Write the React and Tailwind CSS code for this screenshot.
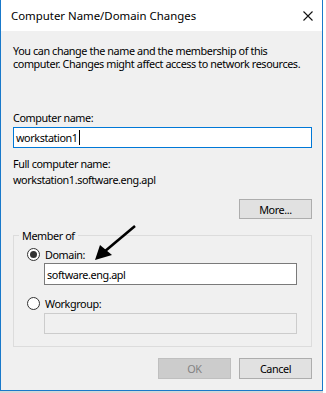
import React from 'react';

const font = { fontFamily: '"Noto Sans", "Liberation Sans", sans-serif' };

function Radio({ checked }) {
  return (
    <span className="w-[13px] h-[13px] rounded-full border border-[#333333] bg-white flex items-center justify-center shrink-0">
      {checked && <span className="w-[7px] h-[7px] rounded-full bg-[#333333]" />}
    </span>
  );
}

export default function App() {
  return (
    <div className="w-[326px] h-[393px] bg-white overflow-hidden text-[10.8px] tracking-[-0.4px] text-black" style={font}>
      <div className="w-[323px] h-[391px] flex flex-col border-x border-b border-[#1979ca] bg-[#f0f0f0]">
        {/* Title bar */}
        <div className="h-[31px] bg-white flex items-center justify-between pl-[10px] pr-[9px] shrink-0">
          <span className="text-[11.4px] tracking-normal">Computer Name/Domain Changes</span>
          <svg width="10" height="10" viewBox="0 0 10 10">
            <path d="M0.5 0.5 L9.5 9.5 M9.5 0.5 L0.5 9.5" stroke="#111" strokeWidth="1.1" />
          </svg>
        </div>

        {/* Body */}
        <div className="flex-1 flex flex-col pl-[12px] pr-[10px] pt-[13px] leading-[13px]">
          <p className="whitespace-nowrap">You can change the name and the membership of this<br />computer. Changes might affect access to network resources.</p>

          <div className="mt-[41px]">Computer name:</div>
          <div className="mt-[3px] h-[21px] border border-[#0078d7] bg-white flex items-center pl-[2px]">
            <span>workstation1</span>
            <span className="w-px h-[15px] bg-black ml-px" />
          </div>

          <div className="mt-[9px]">Full computer name:</div>
          <div className="mt-[3px]">workstation1.software.eng.apl</div>

          <button className="self-end mt-[13px] w-[73px] h-[20px] border border-[#adadad] bg-[#e1e1e1] text-[10.8px] tracking-[-0.4px]">More...</button>

          <fieldset className="relative mt-[10px] border border-[#dcdcdc] pb-[12px]">
            <legend className="ml-[5px] px-[3px]">Member of</legend>
            <div className="flex items-center gap-[5px] mt-[6px] ml-[13px]">
              <Radio checked />
              <span>Domain:</span>
            </div>
            <div className="mt-[2px] ml-[30px] h-[22px] w-[253px] border border-[#7a7a7a] bg-white flex items-center pl-[2px]">
              software.eng.apl
            </div>
            <div className="flex items-center gap-[5px] mt-[12px] ml-[13px]">
              <Radio />
              <span>Workgroup:</span>
            </div>
            <div className="mt-[3px] ml-[30px] h-[21px] w-[253px] border border-[#cccccc] bg-[#f0f0f0]" />

            {/* annotation arrow */}
            <svg className="absolute left-[76px] -top-[18px]" width="50" height="42" viewBox="0 0 50 42">
              <path d="M45 2 L14 28" stroke="#000" strokeWidth="2.6" />
              <polygon points="5,36 10,21 22,31" fill="#000" />
            </svg>
          </fieldset>

          <div className="mt-[11px] flex justify-end gap-[8px]">
            <button className="w-[73px] h-[21px] border border-[#bfbfbf] bg-[#cccccc] text-[#838383] text-[10.8px] tracking-[-0.4px]">OK</button>
            <button className="w-[73px] h-[21px] border border-[#adadad] bg-[#e1e1e1] text-[10.8px] tracking-[-0.4px]">Cancel</button>
          </div>
        </div>
      </div>
      <div className="w-[323px] h-[2px] bg-[#d6d6d6]" />
    </div>
  );
}
